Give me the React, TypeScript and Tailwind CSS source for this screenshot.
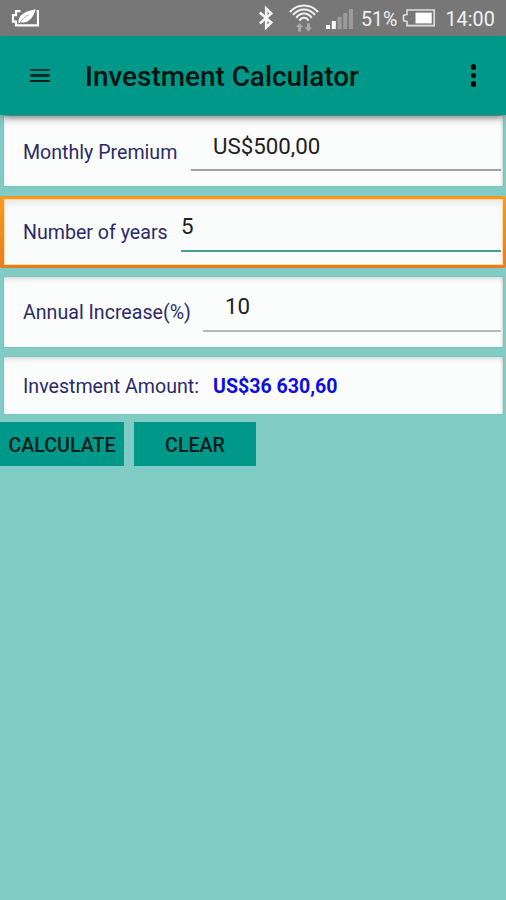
import type { ReactNode } from "react";
import { clsx } from "clsx";

function LeafBatteryIcon() {
  return (
    <svg width="28" height="20" viewBox="0 0 28 20" fill="none">
      <path
        d="M9.5 2.2H5V6.2H2V12.6H5V16.4H27V2.2H25.5"
        stroke="#fff"
        strokeWidth="2.2"
      />
      <path
        d="M7.5 14.6C6.8 6.4 12.5 2.6 24.6 .2C22.4 9.4 16.2 15 9.6 13.2Z"
        fill="#fff"
      />
      <path d="M9 13.6C11 10.2 14 7.6 17.4 5.9" stroke="#999" strokeWidth=".8" />
    </svg>
  );
}

function BluetoothIcon() {
  return (
    <svg width="16" height="26" viewBox="0 0 16 26" fill="none">
      <path
        d="M1.8 7.6L13.2 17.6L8.2 22.4V3.6L13.2 8.4L1.8 18.4"
        stroke="#f4f4f4"
        strokeWidth="2.6"
        strokeLinejoin="miter"
      />
    </svg>
  );
}

function WifiIcon() {
  return (
    <svg width="32" height="30" viewBox="0 0 32 30" fill="none">
      <g stroke="#f0f0f0" strokeWidth="2">
        <path d="M1.8 9.2C9.5 .2 22.5 .2 30.2 9.2" />
        <path d="M4.9 11.9C11 4.6 21 4.6 27.1 11.9" />
        <path d="M8.2 14.8C12.5 9.2 19.5 9.2 23.8 14.8" />
        <path d="M11.4 17.6C14 13.8 18 13.8 20.6 17.6" />
      </g>
      <path d="M11.6 20L15.4 24H13.1V28.4H10.1V24H7.8Z" fill="#aaa" />
      <path d="M20.4 28.6L16.6 24.6H18.9V20.2H21.9V24.6H24.2Z" fill="#aaa" />
    </svg>
  );
}

function SignalIcon() {
  return (
    <svg width="28" height="22" viewBox="0 0 28 22">
      <rect x="0" y="17" width="4" height="4" fill="#fff" />
      <rect x="5.8" y="13" width="4" height="8" fill="#fff" />
      <rect x="11.6" y="9" width="4" height="12" fill="#9b9b9b" />
      <rect x="17.2" y="5" width="4" height="16" fill="#9b9b9b" />
      <rect x="23" y="1" width="4" height="20" fill="#9b9b9b" />
    </svg>
  );
}

function BatteryIcon() {
  return (
    <svg width="34" height="18" viewBox="0 0 34 18" fill="none">
      <path
        d="M5 1H32.2V16.6H5V12.6L1.5 11.6V6.4L5 5.4Z"
        stroke="#dedede"
        strokeWidth="1.6"
      />
      <rect x="13.5" y="3.6" width="16.2" height="10.8" fill="#fff" />
    </svg>
  );
}

function StatusBar() {
  return (
    <div className="flex h-9 items-center bg-[#777777] text-[#f1f1f1]">
      <div className="ml-[11px] mt-px">
        <LeafBatteryIcon />
      </div>
      <div className="ml-[219px]">
        <BluetoothIcon />
      </div>
      <div className="ml-[14px]">
        <WifiIcon />
      </div>
      <div className="ml-[6px] mt-[2px]">
        <SignalIcon />
      </div>
      <span className="ml-[7px] mt-[3px] w-[41px] whitespace-nowrap text-[19.5px]">51%</span>
      <BatteryIcon />
      <span className="ml-[9.5px] mt-[3px] whitespace-nowrap text-[19.8px]">14:00</span>
    </div>
  );
}

function AppBar() {
  return (
    <header className="relative z-10 flex h-[78.5px] items-center bg-[#009888] shadow-[0_5px_8px_-3px_rgba(0,0,0,0.5)]">
      <button className="ml-[30px] flex w-5 flex-col gap-[3px]" aria-label="Menu">
        <span className="h-[2.5px] bg-[#003b35]" />
        <span className="h-[2.5px] bg-[#002b27]" />
        <span className="h-[2.5px] bg-[#001c19]" />
      </button>
      <h1 className="ml-[35px] mt-[3px] whitespace-nowrap text-[27.9px] font-medium text-[#001512]">
        Investment Calculator
      </h1>
      <button className="ml-auto mr-[30px] flex flex-col gap-[3px]" aria-label="More">
        <span className="size-[5.5px] rounded-full bg-black" />
        <span className="size-[5.5px] rounded-full bg-black" />
        <span className="size-[5.5px] rounded-full bg-black" />
      </button>
    </header>
  );
}

function Card({ className, children }: { className?: string; children: ReactNode }) {
  return (
    <section
      className={clsx(
        "ml-1 mr-[3px] flex bg-[#fbfdfc] pl-[19px] shadow-[inset_0_3px_6px_-2px_rgba(0,0,0,0.18),inset_-2px_0_3px_-1px_rgba(0,0,0,0.1),0_0_1px_rgba(0,60,60,0.25)]",
        className
      )}
    >
      {children}
    </section>
  );
}

export default function App() {
  return (
    <div className="h-[900px] w-[506px] overflow-hidden bg-[#80cbc4] font-[Roboto,sans-serif]">
      <StatusBar />
      <AppBar />

      <main className="pt-[1.5px] text-[19.6px] text-[#2a2a68]">
        <Card className="h-[70px]">
          <label className="w-[168px] whitespace-nowrap pt-[22px]">Monthly Premium</label>
          <div className="mr-0.5 h-[55px] flex-1 border-b-2 border-[#a0a0a0] pl-[22px] pt-[14px] text-[22.3px] text-[#202020]">
            US$500,00
          </div>
        </Card>

        {/* focused field */}
        <div className="mt-[10px] h-[72px] rounded-xs bg-linear-to-b from-[#fb981f] to-[#e87d20] px-[3.5px] py-[3px]">
          <section className="flex h-full border border-[#fddca9] bg-[#fafcfb] pl-[18.5px] shadow-[inset_0_5px_8px_-3px_rgba(0,0,0,0.1)]">
            <label className="w-[158px] whitespace-nowrap pt-[17.5px]">Number of years</label>
            <div className="mr-px h-[51.5px] flex-1 border-b-2 border-[#469e90] pt-[9.5px] text-[22.3px] text-[#202020]">
              5
            </div>
          </section>
        </div>

        <Card className="mt-[8.5px] h-[70.5px]">
          <label className="w-[180px] whitespace-nowrap pt-[21px]">Annual Increase(%)</label>
          <div className="mr-0.5 h-[55px] flex-1 border-b-2 border-[#b8b8b8] pl-[22px] pt-[13px] text-[22.3px] text-[#202020]">
            10
          </div>
        </Card>

        <Card className="mt-[10px] h-[57px] items-center pt-[2px]">
          <span className="w-[190px] whitespace-nowrap">Investment Amount:</span>
          <output className="whitespace-nowrap font-bold text-[#0d0de0]">US$36 630,60</output>
        </Card>

        <div className="mt-2 flex gap-[10px] font-medium text-[#001e1a]">
          <button className="h-[44px] w-[124px] bg-[#009888] pt-[4px]">CALCULATE</button>
          <button className="h-[44px] w-[122px] bg-[#009888] pt-[4px]">CLEAR</button>
        </div>
      </main>
    </div>
  );
}
